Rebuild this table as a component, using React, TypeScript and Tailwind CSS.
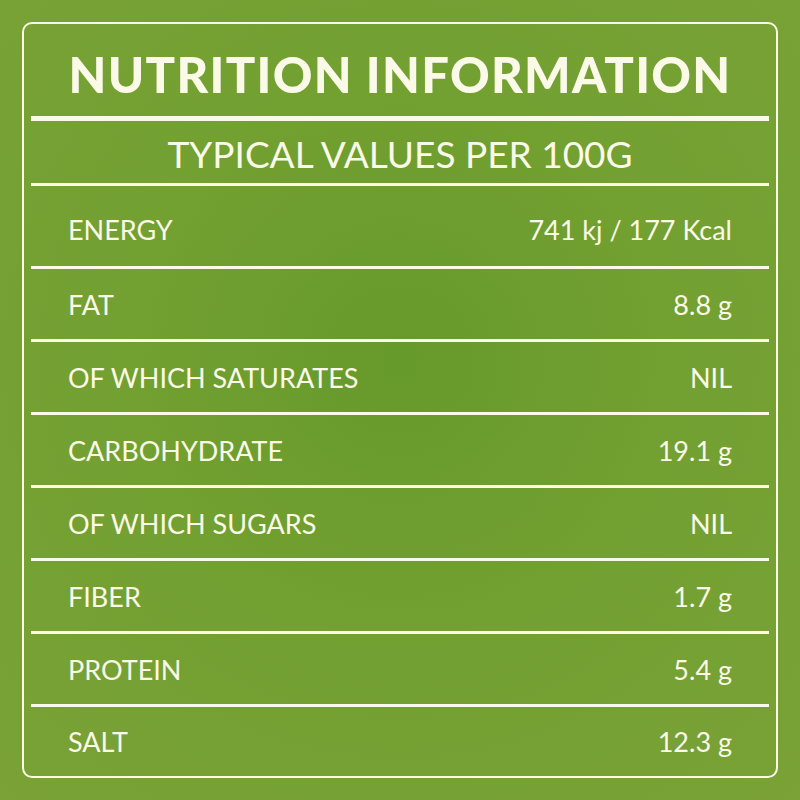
import React from "react";

const rows: [string, string][] = [
  ["FAT", "8.8 g"],
  ["OF WHICH SATURATES", "NIL"],
  ["CARBOHYDRATE", "19.1 g"],
  ["OF WHICH SUGARS", "NIL"],
  ["FIBER", "1.7 g"],
  ["PROTEIN", "5.4 g"],
];

function Line({ thick }: { thick?: boolean }) {
  return <div className={thick ? "h-[5px] bg-[#fbf9e8]" : "h-[3px] bg-[#fbf9e8]"} />;
}

function Row({ label, value, h }: { label: string; value: string; h: string }) {
  return (
    <div className={`flex items-center justify-between pl-[37px] pr-[37px] ${h}`}>
      <span>{label}</span>
      <span>{value}</span>
    </div>
  );
}

export default function App() {
  return (
    <div className="w-[800px] h-[800px] p-[22px] bg-[radial-gradient(circle_at_50%_45%,#669a2b_0%,#72a031_45%,#7aa236_100%)] text-[#fbf9e8] [font-family:Lato,'Open_Sans',sans-serif]">
      <div className="h-full rounded-[10px] border-[2.5px] border-[#fbf9e8] px-[7px] flex flex-col">
        <div className="h-[92px] flex items-center justify-center pt-[9px]">
          <h1 className="text-[49px] font-black tracking-[1.3px] leading-none">NUTRITION INFORMATION</h1>
        </div>
        <Line thick />
        <div className="h-[62px] flex items-center justify-center text-[37px] leading-none pt-[2px]">
          TYPICAL VALUES PER 100G
        </div>
        <Line />
        <div className="text-[27px] leading-none flex flex-col">
          <Row label="ENERGY" value="741 kj / 177 Kcal" h="h-[80px] pt-[6px]" />
          {rows.map(([l, v]) => (
            <React.Fragment key={l}>
              <Line />
              <Row label={l} value={v} h="h-[70px]" />
            </React.Fragment>
          ))}
          <Line />
          <Row label="SALT" value="12.3 g" h="h-[68px]" />
        </div>
      </div>
    </div>
  );
}
